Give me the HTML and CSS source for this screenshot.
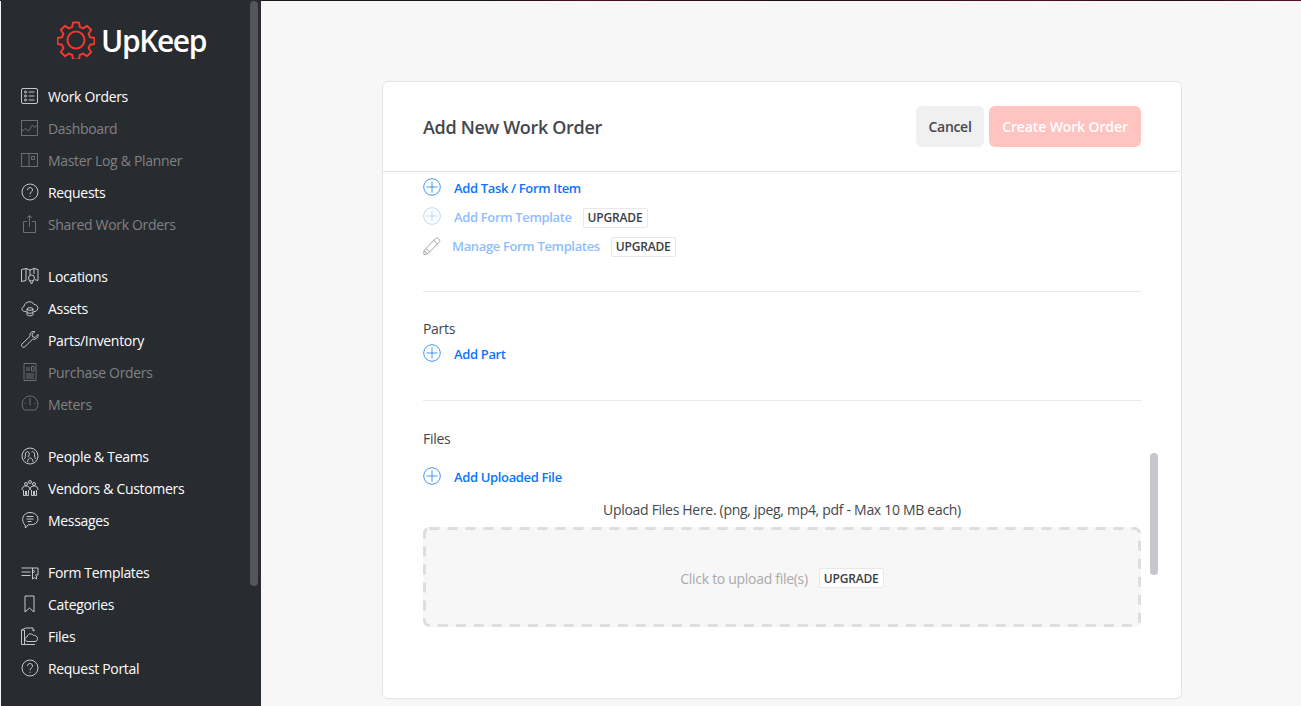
FILE: index.html
```html
<!DOCTYPE html>
<html lang="en">
<head>
  <meta charset="UTF-8" />
  <title>UpKeep - Add New Work Order</title>
  <link rel="stylesheet" href="styles.css">
</head>
<body>
  <div class="top-strip"></div>
  <div class="app">
    <nav class="sidebar">
      <div class="logo">
        <svg class="gear" width="38" height="38" viewBox="0 0 38 38" fill="none" stroke="#f0392b" stroke-width="2" stroke-linejoin="round">
          <path d="M16 1.500h6l.8 4.500 3.400 1.400 3.800-2.600 4.200 4.200-2.600 3.800 1.400 3.400 4.500.8v6l-4.500.8-1.400 3.400 2.600 3.800-4.200 4.200-3.800-2.600-3.400 1.400-.8 4.500h-6l-.8-4.500-3.400-1.400-3.800 2.600-4.200-4.200 2.600-3.800-1.400-3.400-4.500-.8v-6l4.500-.8 1.400-3.400-2.600-3.800 4.200-4.200 3.800 2.600 3.400-1.400z"/>
          <circle cx="19" cy="19" r="8.500"/>
        </svg>
        <span class="logo-text">UpKeep</span>
      </div>

      <ul class="nav-group">
        <li class="nav-item">
          <svg viewBox="0 0 18 18"><rect x=".5" y="1.500" width="16" height="15" rx="1.500"/><circle cx="4.500" cy="5" r="1"/><circle cx="4.500" cy="9" r="1"/><circle cx="4.500" cy="13" r="1"/><path d="M7.500 5h6M7.500 9h6M7.500 13h6"/></svg>
          Work Orders
        </li>
        <li class="nav-item off">
          <svg viewBox="0 0 18 18"><rect x=".5" y="1.500" width="16" height="15"/><path d="M.5 12.500l4-3 3 2.500 4-6 2 2.500 3-2.500"/></svg>
          Dashboard
        </li>
        <li class="nav-item off">
          <svg viewBox="0 0 18 18"><rect x=".5" y="2.500" width="16" height="13"/><path d="M8 2.500v13M10.500 5.500h3v3h-3z"/></svg>
          Master Log &amp; Planner
        </li>
        <li class="nav-item">
          <svg viewBox="0 0 18 18"><circle cx="9" cy="9" r="8"/><path d="M6.500 7c0-3.300 5-3.300 5 0 0 2-2.500 2-2.500 4.200M9 12.800v1"/></svg>
          Requests
        </li>
        <li class="nav-item off">
          <svg viewBox="0 0 18 18"><path d="M6 6.500H2.500v11h12v-11H11M8.500 12V.5M6 3l2.500-2.500L11 3"/></svg>
          Shared Work Orders
        </li>
      </ul>

      <ul class="nav-group">
        <li class="nav-item">
          <svg viewBox="0 0 18 18"><path d="M5 13.500l-4.500 1V2.500l4.500-1 4 1.500 4-1.500 4 1v11l-3-.8M5 1.500v12M9 3v5M13 1.500V7"/><circle cx="10.500" cy="11" r="3"/><path d="M8.500 13.500l2 3.500 2-3.500"/></svg>
          Locations
        </li>
        <li class="nav-item">
          <svg viewBox="0 0 18 18"><path d="M5 12.500H3.500C.5 12.500 0 8 3 7.500 3.500 2.500 11 1 13 5.500c4-.5 5.500 6 1 7h-1"/><ellipse cx="9" cy="10" rx="3" ry="1.300"/><path d="M6 10v5.500c0 1.700 6 1.700 6 0V10M6 13c0 1.700 6 1.700 6 0"/></svg>
          Assets
        </li>
        <li class="nav-item">
          <svg viewBox="0 0 18 18"><path d="M17 3.500l-3 3-2.500-.8L11 3l3-2.500c-3-.8-5.500 1.500-5 4.800L1 13c-1.500 1.500 1 4.500 2.700 3l8-8c3.300 1 6-2 5.300-4.500z"/></svg>
          Parts/Inventory
        </li>
        <li class="nav-item off">
          <svg viewBox="0 0 18 18"><path d="M3 .5h12v17H3z"/><path d="M5 5h4M5 7h4M5 11h8M5 13h8M5 15h8M10.500 3.500H13V8h-2.500z"/></svg>
          Purchase Orders
        </li>
        <li class="nav-item off">
          <svg viewBox="0 0 18 18"><path d="M3.500 15C-1.500 10 2 1 9 1s10.500 9 5.500 14z"/><path d="M9 3v7.500M3.500 8.500h1M13.500 8.500h1"/></svg>
          Meters
        </li>
      </ul>

      <ul class="nav-group">
        <li class="nav-item">
          <svg viewBox="0 0 18 18"><circle cx="9" cy="9" r="8"/><path d="M3.500 12c1-2 1-4 1-5 0-2 2-3 3-2 1.500 1.500.5 4-.5 5M14.500 12c-1-2-1-4-1-5 0-2-2-3-3-2M6.500 15c0-3 2-4 3-4s2.500 1.500 2.500 4"/></svg>
          People &amp; Teams
        </li>
        <li class="nav-item">
          <svg viewBox="0 0 18 18"><circle cx="5" cy="5" r="1.500"/><circle cx="9" cy="3" r="1.500"/><circle cx="13" cy="5" r="1.500"/><path d="M1 11c0-3 1.500-4 4-4s4 1 4 4M9 11c0-3 1.500-4 4-4s4 1 4 4M2.500 11v5.500h2V12M5.500 12v4.500h2V11M10.500 11v5.500h2V12M13.500 12v4.500h2V11"/></svg>
          Vendors &amp; Customers
        </li>
        <li class="nav-item">
          <svg viewBox="0 0 18 18"><path d="M4 14C-.5 10 1.500 1.500 9 1.500c7 0 9.500 6 7 9.500-2 2.800-5.500 3-8.500 2.500L4.500 17z"/><path d="M5.500 5.500h7M5.500 8h7M6.500 10.500h4"/></svg>
          Messages
        </li>
      </ul>

      <ul class="nav-group">
        <li class="nav-item">
          <svg viewBox="0 0 18 18"><path d="M.5 5H17v7h-3M.5 9h9M.5 12.500h9M11.500 5v11l2-1.500 2 1.500v-3"/><circle cx="12.500" cy="8.500" r="1"/></svg>
          Form Templates
        </li>
        <li class="nav-item">
          <svg viewBox="0 0 18 18"><path d="M4 1h9v16l-4.500-4L4 17z"/></svg>
          Categories
        </li>
        <li class="nav-item">
          <svg viewBox="0 0 18 18"><path d="M12 1H4.500L.5 3v14.500H14M.5 3h3v14"/><path d="M7 14.500c-3.500 0-4-4-1-4.500 0-3 5-4.500 6.500-1.500 3-1 5 3 3.500 5-.5.700-1.500 1-2 1z"/><path d="M12 1v3l2-1"/></svg>
          Files
        </li>
        <li class="nav-item">
          <svg viewBox="0 0 18 18"><circle cx="9" cy="9" r="8"/><path d="M6.500 7c0-3.300 5-3.300 5 0 0 2-2.500 2-2.500 4.200M9 12.800v1"/></svg>
          Request Portal
        </li>
      </ul>
      <div class="side-scroll"></div>
    </nav>

    <main class="main">
      <section class="card">
        <header class="card-head">
          <h1>Add New Work Order</h1>
          <div class="actions">
            <button class="btn btn-cancel">Cancel</button>
            <button class="btn btn-create">Create Work Order</button>
          </div>
        </header>

        <div class="card-body">
          <div class="tasks">
            <div class="link-row">
              <svg class="plus" viewBox="0 0 18 18"><circle cx="9" cy="9" r="8.300"/><path d="M9 3.500v11M3.500 9h11"/></svg>
              <a class="link">Add Task / Form Item</a>
            </div>
            <div class="link-row muted">
              <svg class="plus" viewBox="0 0 18 18"><circle cx="9" cy="9" r="8.300"/><path d="M9 3.500v11M3.500 9h11"/></svg>
              <a class="link">Add Form Template</a>
              <span class="badge">UPGRADE</span>
            </div>
            <div class="link-row muted tight">
              <svg class="pencil" viewBox="0 0 18 18"><path d="M1 13.500L12.500 1.500c1-1 2-.8 3.200.4s1.500 2.300.5 3.300L4.700 16.800.8 17.500zM1 13.500l3.700 3.300M3 11.500l3.500 3.300M10.800 3.300l4 3.800"/></svg>
              <a class="link">Manage Form Templates</a>
              <span class="badge">UPGRADE</span>
            </div>
          </div>

          <div class="section parts">
            <div class="label">Parts</div>
            <div class="link-row">
              <svg class="plus" viewBox="0 0 18 18"><circle cx="9" cy="9" r="8.300"/><path d="M9 3.500v11M3.500 9h11"/></svg>
              <a class="link">Add Part</a>
            </div>
          </div>

          <div class="section files">
            <div class="label">Files</div>
            <div class="link-row">
              <svg class="plus" viewBox="0 0 18 18"><circle cx="9" cy="9" r="8.300"/><path d="M9 3.500v11M3.500 9h11"/></svg>
              <a class="link">Add Uploaded File</a>
            </div>
            <div class="upload-title">Upload Files Here. (png, jpeg, mp4, pdf - Max 10 MB each)</div>
            <div class="dropzone">
              <svg class="dash" width="718" height="100"><rect x="1.500" y="1.500" width="715" height="97" rx="5"/></svg>
              <span>Click to upload file(s)</span>
              <span class="badge">UPGRADE</span>
            </div>
          </div>
        </div>
        <div class="card-scroll"></div>
      </section>
    </main>
  </div>
</body>
</html>
```

FILE: styles.css
```css
* {
  box-sizing: border-box;
}
html, body {
  height: 100%;
}
body {
  margin: 0;
  overflow: hidden;
  font-family: "Open Sans", sans-serif;
  font-size: 14px;
  letter-spacing: -0.3px;
  color: #45474d;
  background: #f7f7f7;
}
.top-strip {
  position: absolute;
  top: 0;
  left: 0;
  right: 0;
  height: 1px;
  background: linear-gradient(90deg, #1b1416 0%, #4a0f1c 8%, #1d1a1d 20%, #1c1416 38%, #4a0f1c 45%, #1b1114 60%, #4a0f1c 80%, #240f14 90%, #5a1020 100%);
}
.app {
  display: flex;
  height: 100%;
}

/* sidebar */
.sidebar {
  position: relative;
  width: 260px;
  margin-left: 1px;
  background: #282b30;
  color: #fff;
  flex-shrink: 0;
}
.logo {
  display: flex;
  align-items: center;
  height: 80px;
  padding: 0 0 0 56px;
}
.logo-text {
  margin-left: 6px;
  font-size: 30px;
  font-weight: 600;
  letter-spacing: -1.4px;
}
.nav-group {
  list-style: none;
  margin: 0 0 20px;
  padding: 0;
}
.nav-item {
  display: flex;
  align-items: center;
  gap: 9px;
  height: 32px;
  padding-left: 20px;
  white-space: nowrap;
  letter-spacing: -0.32px;
}
.nav-item svg {
  width: 18px;
  height: 18px;
  fill: none;
  stroke: #d8d8da;
  stroke-width: 0.9;
  flex-shrink: 0;
}
.nav-item.off {
  color: #808285;
}
.nav-item.off svg {
  stroke: #74767a;
}
.side-scroll {
  position: absolute;
  top: 1px;
  left: 249px;
  width: 8px;
  height: 585px;
  border-radius: 4px;
  background: #55565c;
}

/* main */
.main {
  flex: 1;
  padding: 81px 0 0 121px;
}
.card {
  position: relative;
  width: 800px;
  height: 618px;
  background: #fff;
  border: 1px solid #e4e4e4;
  border-radius: 6px;
}
.card-head {
  display: flex;
  align-items: center;
  justify-content: space-between;
  height: 90px;
  padding: 0 40px;
  border-bottom: 1px solid #e4e4e4;
}
.card-head h1 {
  margin: 0;
  font-size: 18px;
  font-weight: 600;
  color: #45474d;
  letter-spacing: -0.33px;
}
.actions {
  display: flex;
  gap: 5px;
}
.btn {
  height: 41px;
  border: 0;
  border-radius: 6px;
  font-family: inherit;
  font-size: 14px;
  font-weight: 600;
}
.btn-cancel {
  width: 68px;
  background: #f0f0f0;
  color: #45474d;
  letter-spacing: -0.3px;
}
.btn-create {
  width: 152px;
  background: #ffc4c0;
  color: #fff;
  letter-spacing: -0.12px;
}
.card-body {
  padding: 1px 40px 0;
}
.link-row {
  display: flex;
  align-items: center;
  height: 29px;
}
.plus {
  width: 18px;
  height: 18px;
  margin-right: 13px;
  margin-bottom: 2px;
  fill: none;
  stroke: #2d8cf0;
  stroke-width: 0.9;
}
.pencil {
  width: 18px;
  height: 18px;
  margin-right: 11px;
  fill: none;
  stroke: #9a9a9a;
  stroke-width: 0.9;
}
.link {
  font-size: 13px;
  font-weight: 600;
  color: #0a74ff;
  letter-spacing: -0.35px;
}
.muted .link {
  color: #8fbdff;
}
.muted .plus {
  stroke: #a9d0f8;
}
.badge {
  display: inline-flex;
  align-items: center;
  height: 20px;
  padding: 0 4px;
  margin-left: 11px;
  margin-top: 2px;
  border: 1px solid #e8e8e8;
  border-radius: 2px;
  background: #fff;
  font-size: 12px;
  font-weight: 600;
  color: #3a3c42;
  letter-spacing: -0.17px;
}
.tasks {
  height: 119px;
  border-bottom: 1px solid #e9e9e9;
}
.section {
  border-bottom: 1px solid #e9e9e9;
}
.label {
  font-size: 14px;
  color: #45474d;
}
.parts {
  height: 109px;
  padding-top: 27px;
}
.parts .label {
  height: 22px;
  line-height: 20px;
}
.parts .link-row {
  height: 26px;
}
.files {
  border-bottom: 0;
  padding-top: 28px;
}
.files .label {
  height: 20px;
  line-height: 20px;
}
.files .link-row {
  margin-top: 13px;
}
.upload-title {
  margin-top: 8px;
  height: 24px;
  line-height: 22px;
  text-align: center;
}
.dropzone {
  position: relative;
  display: flex;
  align-items: center;
  justify-content: center;
  height: 100px;
  margin-top: 4px;
  padding-top: 2px;
  border-radius: 6px;
  background: #f7f7f7;
  color: #aaa;
}
.dropzone .badge {
  margin-top: 0;
}
.dash {
  position: absolute;
  top: 0;
  left: 0;
}
.dash rect {
  fill: none;
  stroke: #dedede;
  stroke-width: 3;
  stroke-dasharray: 10 8;
}
.card-scroll {
  position: absolute;
  top: 371px;
  left: 767px;
  width: 8px;
  height: 122px;
  border-radius: 4px;
  background: #c8c6cc;
}
```
